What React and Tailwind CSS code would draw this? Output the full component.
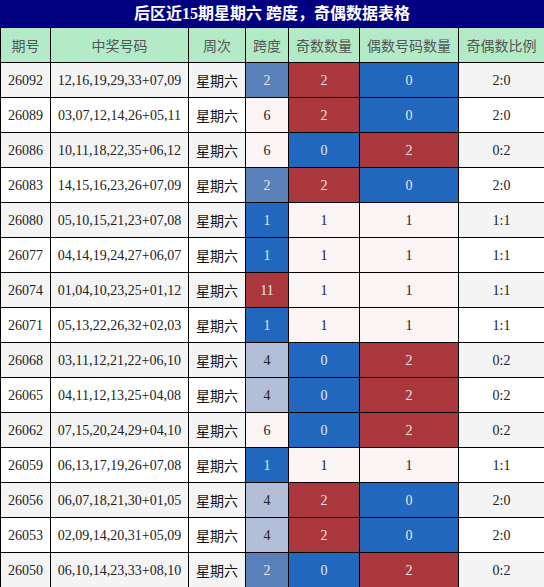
import React from "react";

const rows = [
  ["26092", "12,16,19,29,33+07,09", 2, 2, 0, "2:0"],
  ["26089", "03,07,12,14,26+05,11", 6, 2, 0, "2:0"],
  ["26086", "10,11,18,22,35+06,12", 6, 0, 2, "0:2"],
  ["26083", "14,15,16,23,26+07,09", 2, 2, 0, "2:0"],
  ["26080", "05,10,15,21,23+07,08", 1, 1, 1, "1:1"],
  ["26077", "04,14,19,24,27+06,07", 1, 1, 1, "1:1"],
  ["26074", "01,04,10,23,25+01,12", 11, 1, 1, "1:1"],
  ["26071", "05,13,22,26,32+02,03", 1, 1, 1, "1:1"],
  ["26068", "03,11,12,21,22+06,10", 4, 0, 2, "0:2"],
  ["26065", "04,11,12,13,25+04,08", 4, 0, 2, "0:2"],
  ["26062", "07,15,20,24,29+04,10", 6, 0, 2, "0:2"],
  ["26059", "06,13,17,19,26+07,08", 1, 1, 1, "1:1"],
  ["26056", "06,07,18,21,30+01,05", 4, 2, 0, "2:0"],
  ["26053", "02,09,14,20,31+05,09", 4, 2, 0, "2:0"],
  ["26050", "06,10,14,23,33+08,10", 2, 0, 2, "0:2"],
];

const spanColor = {
  1: "bg-[#2167be] text-[#e8e8e8]",
  2: "bg-[#5a80ba] text-[#e8e8e8]",
  4: "bg-[#b3bfd8] text-[#222]",
  6: "bg-[#faf4f4] text-[#222]",
  11: "bg-[#a9373c] text-[#e8e8e8]",
};

const countColor = {
  0: "bg-[#2167be] text-[#e8e8e8]",
  1: "bg-[#faf4f4] text-[#222]",
  2: "bg-[#a9373c] text-[#e8e8e8]",
};

const cjk = "font-['Noto_Sans_CJK_SC',sans-serif]";
const serif = "font-['Liberation_Serif','Noto_Sans_CJK_SC',serif]";

const headers = ["期号", "中奖号码", "周次", "跨度", "奇数数量", "偶数号码数量", "奇偶数比例"];

export default function App() {
  return (
    <div className="w-[544px] bg-white">
      <div className={`h-[27px] bg-[#000080] text-white text-[16px] font-bold text-center leading-[27px] ${serif}`}>
        后区近15期星期六 跨度，奇偶数据表格
      </div>
      <table className="w-[544px] table-fixed border-collapse">
        <colgroup>
          <col className="w-[50px]" />
          <col className="w-[138px]" />
          <col className="w-[57px]" />
          <col className="w-[43px]" />
          <col className="w-[71px]" />
          <col className="w-[99px]" />
          <col className="w-[86px]" />
        </colgroup>
        <thead>
          <tr className="h-[35px]">
            {headers.map((h) => (
              <th
                key={h}
                className={`border border-black bg-[#b3ebc9] text-[#555] text-[14px] font-normal text-center p-0 ${cjk}`}
              >
                {h}
              </th>
            ))}
          </tr>
        </thead>
        <tbody>
          {rows.map((r, i) => {
            const base = i % 2 === 0 ? "bg-[#f4f4f4]" : "bg-white";
            return (
              <tr key={r[0]} className="h-[35px]">
                <td className={`border border-black text-center p-0 text-[14px] text-[#222] ${serif} ${base}`}>{r[0]}</td>
                <td className={`border border-black text-center p-0 text-[14px] text-[#222] ${serif} ${base}`}>{r[1]}</td>
                <td className={`border border-black text-center p-0 text-[14px] text-[#111] ${cjk} ${base}`}>星期六</td>
                <td className={`border border-black text-center p-0 text-[14px] ${serif} ${spanColor[r[2]]}`}>{r[2]}</td>
                <td className={`border border-black text-center p-0 text-[14px] ${serif} ${countColor[r[3]]}`}>{r[3]}</td>
                <td className={`border border-black text-center p-0 text-[14px] ${serif} ${countColor[r[4]]}`}>{r[4]}</td>
                <td className={`border border-black text-center p-0 text-[14px] text-[#222] ${serif} ${base}`}>{r[5]}</td>
              </tr>
            );
          })}
        </tbody>
      </table>
    </div>
  );
}
